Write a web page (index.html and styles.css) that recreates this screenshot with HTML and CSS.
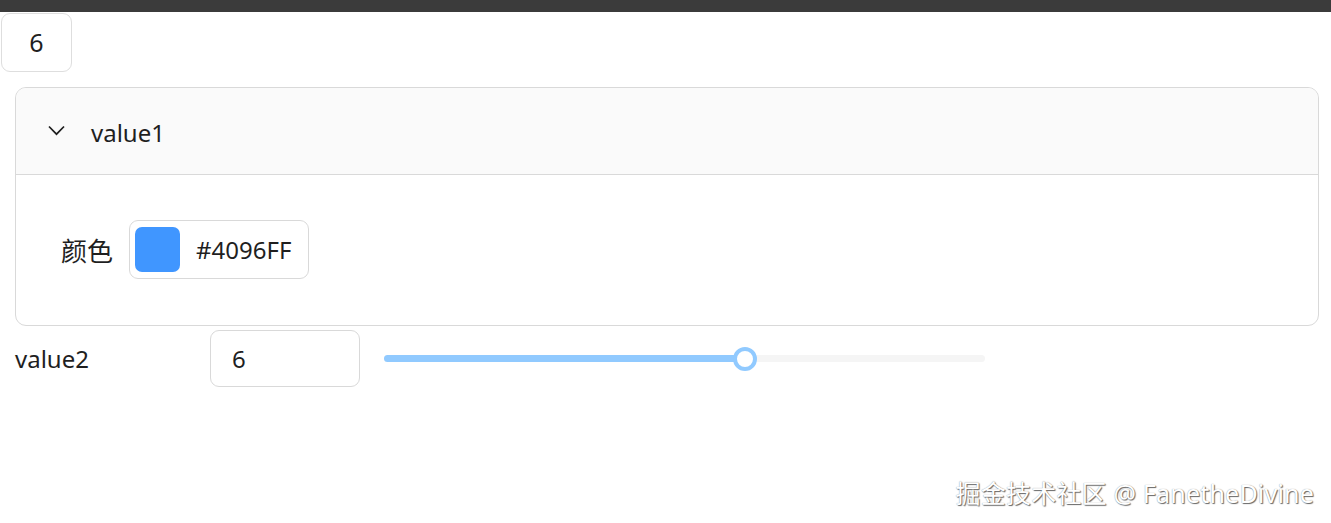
FILE: index.html
```html
<!DOCTYPE html>
<html lang="zh-CN">
<head>
<meta charset="utf-8">
<title>demo</title>
<link rel="stylesheet" href="styles.css">
</head>
<body>
<div class="topbar"></div>
<div class="num-box">6</div>
<div class="collapse">
  <div class="collapse-header">
    <svg class="chevron" width="17" height="11" viewBox="0 0 17 11"><polyline points="1,1.5 8.5,9.2 16,1.5" fill="none" stroke="#1f1f1f" stroke-width="1.7"/></svg>
    <span class="collapse-title">value1</span>
  </div>
  <div class="collapse-body">
    <span class="form-label">颜色</span>
    <div class="color-picker">
      <span class="swatch"></span>
      <span class="color-text">#4096FF</span>
    </div>
  </div>
</div>
<div class="row">
  <span class="row-label">value2</span>
  <div class="row-input">6</div>
  <div class="slider">
    <div class="slider-track"><div class="slider-fill" style="width:60%"></div></div>
    <div class="slider-handle" style="left:60%"></div>
  </div>
</div>
<div class="watermark">掘金技术社区 @ FanetheDivine</div>
</body>
</html>
```

FILE: styles.css
```css
html, body {
  margin: 0;
  padding: 0;
  background: #fff;
}
body {
  position: relative;
  width: 1331px;
  height: 523px;
  overflow: hidden;
  font-family: "Noto Sans", "Noto Sans CJK SC", sans-serif;
  font-size: 24px;
  color: #1f1f1f;
}
.topbar {
  height: 12px;
  background: #3b3b3b;
}
.num-box {
  box-sizing: border-box;
  margin: 1px 0 0 1px;
  width: 71px;
  height: 59px;
  border: 1px solid #dedede;
  border-radius: 9px;
  display: flex;
  align-items: center;
  justify-content: center;
  line-height: 1;
  font-size: 25px;
}
.collapse {
  box-sizing: border-box;
  margin: 15px 12px 0 15px;
  width: 1304px;
  height: 239px;
  border: 1px solid #d9d9d9;
  border-radius: 11px;
  overflow: hidden;
}
.collapse-header {
  box-sizing: border-box;
  height: 87px;
  background: #fafafa;
  border-bottom: 1px solid #d9d9d9;
  display: flex;
  align-items: center;
  padding-left: 32px;
}
.chevron {
  display: block;
  margin-right: 26px;
  margin-bottom: 2px;
}
.collapse-title {
  line-height: 1;
  padding-top: 3px;
}
.collapse-body {
  display: flex;
  align-items: center;
  padding: 45px 0 0 45px;
}
.form-label {
  font-family: "Noto Sans CJK SC", sans-serif;
  font-size: 26px;
  margin-right: 16px;
  line-height: 1;
}
.color-picker {
  box-sizing: border-box;
  width: 180px;
  height: 59px;
  border: 1px solid #d9d9d9;
  border-radius: 9px;
  display: flex;
  align-items: center;
  padding-left: 5px;
}
.swatch {
  width: 45px;
  height: 45px;
  border-radius: 7px;
  background: #4096ff;
  margin-right: 16px;
}
.color-text {
  line-height: 1;
}
.row {
  display: flex;
  align-items: center;
  margin-top: 4px;
  padding-left: 15px;
}
.row-label {
  width: 195px;
  line-height: 1;
}
.row-input {
  box-sizing: border-box;
  width: 150px;
  height: 57px;
  border: 1px solid #d9d9d9;
  border-radius: 9px;
  display: flex;
  align-items: center;
  padding-left: 21px;
  line-height: 1;
}
.slider {
  position: relative;
  margin-left: 24px;
  width: 601px;
  height: 24px;
  display: flex;
  align-items: center;
}
.slider-track {
  width: 100%;
  height: 7px;
  border-radius: 4px;
  background: #f5f5f5;
}
.slider-fill {
  height: 100%;
  border-radius: 4px;
  background: #91caff;
}
.slider-handle {
  position: absolute;
  top: 0;
  box-sizing: border-box;
  width: 24px;
  height: 24px;
  margin-left: -12px;
  border: 4px solid #91caff;
  border-radius: 50%;
  background: #fff;
}
.watermark {
  position: absolute;
  right: 17px;
  top: 475px;
  font-family: "Noto Sans", "Noto Sans CJK SC", sans-serif;
  font-size: 25px;
  letter-spacing: 0.2px;
  line-height: 36px;
  color: #fff;
  text-shadow: 1px 1px 1px #666, 0 0 1px #888;
  white-space: nowrap;
}
```
